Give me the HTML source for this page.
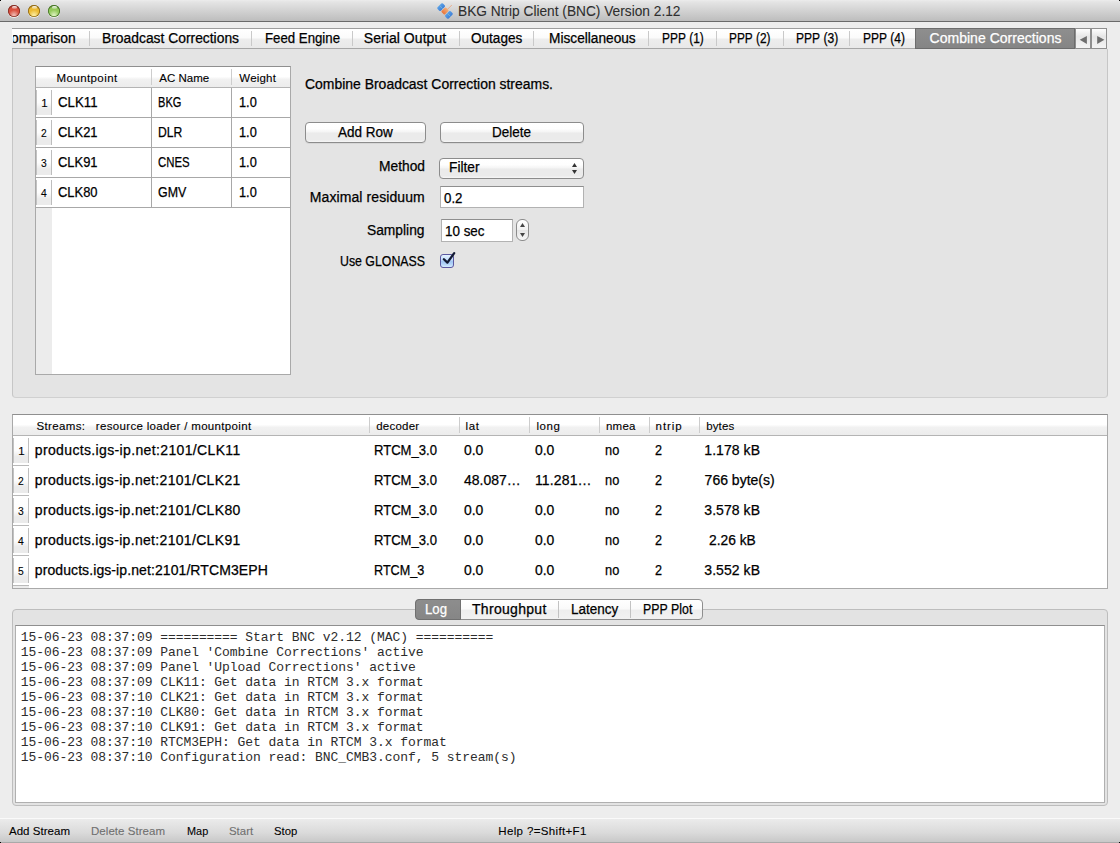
<!DOCTYPE html>
<html><head><meta charset="utf-8"><title>BNC</title>
<style>
html,body{margin:0;padding:0;}
body{width:1120px;height:843px;position:relative;overflow:hidden;background:#ededed;font-family:"Liberation Sans", sans-serif;}
body div, body svg{position:absolute;}
.t{white-space:pre;line-height:1;-webkit-text-stroke:0.25px currentColor;}
</style></head><body>
<div style="left:0px;top:0px;width:1120px;height:21px;background:linear-gradient(#ececec,#e4e4e4 10%,#bdbdbd);"></div>
<div style="left:0px;top:21px;width:1120px;height:1px;background:#6a6a6a;"></div>
<div style="left:8px;top:5px;width:12px;height:12px;border-radius:50%;background:radial-gradient(circle at 50% 85%, #f0c0b8 0%, #d9503f 45%, #d9503f 60%, #7e2a22 95%);box-shadow:inset 0 0 0 0.8px #7e2a22, 0 1px 0.5px rgba(255,255,255,0.7);"></div>
<div style="left:11.5px;top:6.2px;width:5px;height:2.6px;border-radius:50%;background:linear-gradient(rgba(255,255,255,0.95),rgba(255,255,255,0.2));"></div>
<div style="left:28px;top:5px;width:12px;height:12px;border-radius:50%;background:radial-gradient(circle at 50% 85%, #fbefa6 0%, #ecbb34 45%, #ecbb34 60%, #8a6412 95%);box-shadow:inset 0 0 0 0.8px #8a6412, 0 1px 0.5px rgba(255,255,255,0.7);"></div>
<div style="left:31.5px;top:6.2px;width:5px;height:2.6px;border-radius:50%;background:linear-gradient(rgba(255,255,255,0.95),rgba(255,255,255,0.2));"></div>
<div style="left:48px;top:5px;width:12px;height:12px;border-radius:50%;background:radial-gradient(circle at 50% 85%, #dff3c2 0%, #94ca5c 45%, #94ca5c 60%, #3f6e22 95%);box-shadow:inset 0 0 0 0.8px #3f6e22, 0 1px 0.5px rgba(255,255,255,0.7);"></div>
<div style="left:51.5px;top:6.2px;width:5px;height:2.6px;border-radius:50%;background:linear-gradient(rgba(255,255,255,0.95),rgba(255,255,255,0.2));"></div>
<svg style="left:434px;top:0px;width:22px;height:21px" viewBox="0 0 22 21">
<defs><linearGradient id="sp" x1="0" y1="0" x2="1" y2="0"><stop offset="0" stop-color="#5aa2e8"/><stop offset="1" stop-color="#3f7fd6"/></linearGradient>
<linearGradient id="bo" x1="0" y1="0" x2="0" y2="1"><stop offset="0" stop-color="#f4b07a"/><stop offset="1" stop-color="#e8743a"/></linearGradient></defs>
<g transform="rotate(45 11 11)">
<line x1="11.6" y1="8" x2="11.6" y2="2" stroke="#f0a070" stroke-width="0.9" opacity="0.8"/>
<rect x="3.1" y="7.2" width="4.8" height="7.6" rx="1.2" fill="url(#sp)"/>
<rect x="14.1" y="7.2" width="4.8" height="7.6" rx="1.2" fill="url(#sp)"/>
<line x1="3.3" y1="11" x2="7.7" y2="11" stroke="#8fc0c8" stroke-width="0.6"/>
<line x1="14.3" y1="11" x2="18.7" y2="11" stroke="#8fc0c8" stroke-width="0.6"/>
<rect x="8.6" y="7.8" width="4.8" height="6.4" rx="1" fill="url(#bo)"/>
</g>
</svg>
<div class="t" style="left:457.70px;top:4px;font-size:14px;font-family:'Liberation Sans', sans-serif;color:#2e2e2e;transform:scaleX(0.9791);transform-origin:0 0;-webkit-text-stroke:0.08px currentColor;">BKG&#160;Ntrip&#160;Client&#160;(BNC)&#160;Version&#160;2.12</div>
<div style="left:12px;top:28px;width:1095px;height:21px;background:linear-gradient(#ffffff,#fbfbfb 45%,#ededed 55%,#e9e9e9);border-top:1px solid #9d9d9d;border-bottom:1px solid #a7a7a7;box-sizing:border-box;"></div>
<div style="left:89px;top:31px;width:1px;height:15px;background:#c9c9c9;"></div>
<div style="left:251px;top:31px;width:1px;height:15px;background:#c9c9c9;"></div>
<div style="left:352px;top:31px;width:1px;height:15px;background:#c9c9c9;"></div>
<div style="left:459px;top:31px;width:1px;height:15px;background:#c9c9c9;"></div>
<div style="left:533px;top:31px;width:1px;height:15px;background:#c9c9c9;"></div>
<div style="left:648px;top:31px;width:1px;height:15px;background:#c9c9c9;"></div>
<div style="left:716px;top:31px;width:1px;height:15px;background:#c9c9c9;"></div>
<div style="left:783px;top:31px;width:1px;height:15px;background:#c9c9c9;"></div>
<div style="left:849px;top:31px;width:1px;height:15px;background:#c9c9c9;"></div>
<div style="left:13px;top:29px;width:76px;height:19px;overflow:hidden;">
<div class="t" style="left:-11.93px;top:2.00px;font-size:14px;font-family:'Liberation Sans', sans-serif;color:#000;transform:scaleX(0.9892);transform-origin:0 0;">Comparison</div>
</div>
<div class="t" style="left:101.75px;top:31px;font-size:14px;font-family:'Liberation Sans', sans-serif;color:#000;transform:scaleX(0.9892);transform-origin:0 0;">Broadcast&#160;Corrections</div>
<div class="t" style="left:264.50px;top:31px;font-size:14px;font-family:'Liberation Sans', sans-serif;color:#000;transform:scaleX(0.9449);transform-origin:0 0;">Feed&#160;Engine</div>
<div class="t" style="left:363.75px;top:31px;font-size:14px;font-family:'Liberation Sans', sans-serif;color:#000;letter-spacing:0.062px;">Serial&#160;Output</div>
<div class="t" style="left:471.25px;top:31px;font-size:14px;font-family:'Liberation Sans', sans-serif;color:#000;transform:scaleX(0.9693);transform-origin:0 0;">Outages</div>
<div class="t" style="left:548.75px;top:31px;font-size:14px;font-family:'Liberation Sans', sans-serif;color:#000;transform:scaleX(0.9775);transform-origin:0 0;">Miscellaneous</div>
<div class="t" style="left:661.75px;top:31px;font-size:14px;font-family:'Liberation Sans', sans-serif;color:#000;transform:scaleX(0.8513);transform-origin:0 0;">PPP&#160;(1)</div>
<div class="t" style="left:728.75px;top:31px;font-size:14px;font-family:'Liberation Sans', sans-serif;color:#000;transform:scaleX(0.8462);transform-origin:0 0;">PPP&#160;(2)</div>
<div class="t" style="left:795.50px;top:31px;font-size:14px;font-family:'Liberation Sans', sans-serif;color:#000;transform:scaleX(0.8615);transform-origin:0 0;">PPP&#160;(3)</div>
<div class="t" style="left:862.50px;top:31px;font-size:14px;font-family:'Liberation Sans', sans-serif;color:#000;transform:scaleX(0.8564);transform-origin:0 0;">PPP&#160;(4)</div>
<div style="left:915px;top:28px;width:160px;height:21px;background:linear-gradient(#8e8e8e,#858585);border:1px solid #6c6c6c;box-sizing:border-box;"></div>
<div class="t" style="left:929.50px;top:31px;font-size:14px;font-family:'Liberation Sans', sans-serif;color:#ffffff;letter-spacing:0.028px;">Combine&#160;Corrections</div>
<div style="left:1075px;top:28px;width:16px;height:21px;background:linear-gradient(#fdfdfd,#e6e6e6 40%,#f4f4f4);border:1px solid #8f8f8f;box-sizing:border-box;"></div>
<div style="left:1091px;top:28px;width:16px;height:21px;background:linear-gradient(#fdfdfd,#e6e6e6 40%,#f4f4f4);border:1px solid #8f8f8f;box-sizing:border-box;"></div>
<svg style="left:1075px;top:28px;width:32px;height:21px" viewBox="0 0 32 21"><polygon points="4.7,11.8 11.9,7.9 11.9,15.9" fill="#6e6e6e"/><polygon points="22.2,7.9 29.4,11.8 22.2,15.9" fill="#6e6e6e"/></svg>
<div style="left:12px;top:49px;width:1096px;height:349px;background:#e4e4e4;border:1px solid #c6c6c6;border-bottom-color:#d0d0d0;border-top:none;border-radius:0 0 4px 4px;box-sizing:border-box;"></div>
<div style="left:35px;top:66px;width:256px;height:309px;background:#fff;border:1px solid #a9a9a9;border-top-color:#8f8f8f;box-sizing:border-box;"></div>
<div style="left:36px;top:67px;width:254px;height:20px;background:linear-gradient(#ffffff,#ffffff 48%,#f1f1f1 62%,#ececec);"></div>
<div style="left:36px;top:87px;width:254px;height:1px;background:#b4b4b4;"></div>
<div style="left:151px;top:69px;width:1px;height:16px;background:#cdcdcd;"></div>
<div style="left:231px;top:69px;width:1px;height:16px;background:#cdcdcd;"></div>
<div style="left:36px;top:208px;width:16px;height:166px;background:#ececec;"></div>
<div style="left:36px;top:88px;width:16px;height:29px;background:linear-gradient(#ffffff,#fdfdfd 50%,#ebebeb 72%,#ebebeb 93%,#ffffff 93%);"></div>
<div style="left:36px;top:90px;width:1px;height:25px;background:#c2c2c2;"></div>
<div style="left:51px;top:90px;width:1px;height:25px;background:#bdbdbd;"></div>
<div style="left:36px;top:117px;width:254px;height:1px;background:#a8a8a8;"></div>
<div style="left:36px;top:118px;width:16px;height:29px;background:linear-gradient(#ffffff,#fdfdfd 50%,#ebebeb 72%,#ebebeb 93%,#ffffff 93%);"></div>
<div style="left:36px;top:120px;width:1px;height:25px;background:#c2c2c2;"></div>
<div style="left:51px;top:120px;width:1px;height:25px;background:#bdbdbd;"></div>
<div style="left:36px;top:147px;width:254px;height:1px;background:#a8a8a8;"></div>
<div style="left:36px;top:148px;width:16px;height:29px;background:linear-gradient(#ffffff,#fdfdfd 50%,#ebebeb 72%,#ebebeb 93%,#ffffff 93%);"></div>
<div style="left:36px;top:150px;width:1px;height:25px;background:#c2c2c2;"></div>
<div style="left:51px;top:150px;width:1px;height:25px;background:#bdbdbd;"></div>
<div style="left:36px;top:177px;width:254px;height:1px;background:#a8a8a8;"></div>
<div style="left:36px;top:178px;width:16px;height:29px;background:linear-gradient(#ffffff,#fdfdfd 50%,#ebebeb 72%,#ebebeb 93%,#ffffff 93%);"></div>
<div style="left:36px;top:180px;width:1px;height:25px;background:#c2c2c2;"></div>
<div style="left:51px;top:180px;width:1px;height:25px;background:#bdbdbd;"></div>
<div style="left:36px;top:207px;width:254px;height:1px;background:#a8a8a8;"></div>
<div style="left:151px;top:88px;width:1px;height:120px;background:#a8a8a8;"></div>
<div style="left:231px;top:88px;width:1px;height:120px;background:#a8a8a8;"></div>
<div class="t" style="left:56.60px;top:73px;font-size:11.5px;font-family:'Liberation Sans', sans-serif;color:#000;letter-spacing:0.403px;-webkit-text-stroke:0.1px currentColor;">Mountpoint</div>
<div class="t" style="left:159.30px;top:73px;font-size:11.5px;font-family:'Liberation Sans', sans-serif;color:#000;letter-spacing:0.021px;-webkit-text-stroke:0.1px currentColor;">AC&#160;Name</div>
<div class="t" style="left:239.30px;top:73px;font-size:11.5px;font-family:'Liberation Sans', sans-serif;color:#000;letter-spacing:0.195px;-webkit-text-stroke:0.1px currentColor;">Weight</div>
<div class="t" style="left:41.20px;top:98px;font-size:11.5px;font-family:'Liberation Sans', sans-serif;color:#000;-webkit-text-stroke:0.1px currentColor;">1</div>
<div class="t" style="left:57.50px;top:95px;font-size:14px;font-family:'Liberation Sans', sans-serif;color:#000;transform:scaleX(0.9461);transform-origin:0 0;">CLK11</div>
<div class="t" style="left:157.50px;top:95px;font-size:14px;font-family:'Liberation Sans', sans-serif;color:#000;transform:scaleX(0.7899);transform-origin:0 0;">BKG</div>
<div class="t" style="left:238.60px;top:95px;font-size:14px;font-family:'Liberation Sans', sans-serif;color:#000;transform:scaleX(0.9128);transform-origin:0 0;">1.0</div>
<div class="t" style="left:40.80px;top:128px;font-size:11.5px;font-family:'Liberation Sans', sans-serif;color:#000;transform:scaleX(0.8941);transform-origin:0 0;-webkit-text-stroke:0.1px currentColor;">2</div>
<div class="t" style="left:57.50px;top:125px;font-size:14px;font-family:'Liberation Sans', sans-serif;color:#000;transform:scaleX(0.9240);transform-origin:0 0;">CLK21</div>
<div class="t" style="left:157.50px;top:125px;font-size:14px;font-family:'Liberation Sans', sans-serif;color:#000;transform:scaleX(0.8679);transform-origin:0 0;">DLR</div>
<div class="t" style="left:238.60px;top:125px;font-size:14px;font-family:'Liberation Sans', sans-serif;color:#000;transform:scaleX(0.9128);transform-origin:0 0;">1.0</div>
<div class="t" style="left:40.80px;top:158px;font-size:11.5px;font-family:'Liberation Sans', sans-serif;color:#000;transform:scaleX(0.8941);transform-origin:0 0;-webkit-text-stroke:0.1px currentColor;">3</div>
<div class="t" style="left:57.50px;top:155px;font-size:14px;font-family:'Liberation Sans', sans-serif;color:#000;transform:scaleX(0.9240);transform-origin:0 0;">CLK91</div>
<div class="t" style="left:157.50px;top:155px;font-size:14px;font-family:'Liberation Sans', sans-serif;color:#000;transform:scaleX(0.8129);transform-origin:0 0;">CNES</div>
<div class="t" style="left:238.60px;top:155px;font-size:14px;font-family:'Liberation Sans', sans-serif;color:#000;transform:scaleX(0.9128);transform-origin:0 0;">1.0</div>
<div class="t" style="left:40.80px;top:188px;font-size:11.5px;font-family:'Liberation Sans', sans-serif;color:#000;transform:scaleX(0.8941);transform-origin:0 0;-webkit-text-stroke:0.1px currentColor;">4</div>
<div class="t" style="left:57.50px;top:185px;font-size:14px;font-family:'Liberation Sans', sans-serif;color:#000;transform:scaleX(0.9240);transform-origin:0 0;">CLK80</div>
<div class="t" style="left:157.50px;top:185px;font-size:14px;font-family:'Liberation Sans', sans-serif;color:#000;transform:scaleX(0.8847);transform-origin:0 0;">GMV</div>
<div class="t" style="left:238.60px;top:185px;font-size:14px;font-family:'Liberation Sans', sans-serif;color:#000;transform:scaleX(0.9128);transform-origin:0 0;">1.0</div>
<div class="t" style="left:305.40px;top:77px;font-size:14px;font-family:'Liberation Sans', sans-serif;color:#000;transform:scaleX(0.9960);transform-origin:0 0;">Combine&#160;Broadcast&#160;Correction&#160;streams.</div>
<div style="left:305px;top:122px;width:121px;height:21px;background:linear-gradient(#ffffff,#fefefe 30%,#f4f4f4 48%,#ebebeb 52%,#ebebeb 88%,#f6f6f6);border:1px solid #8c8c8c;border-radius:4px;box-sizing:border-box;box-shadow:0 1px 0 rgba(0,0,0,0.06);"></div>
<div class="t" style="left:338.00px;top:125px;font-size:14px;font-family:'Liberation Sans', sans-serif;color:#000;transform:scaleX(0.9649);transform-origin:0 0;">Add&#160;Row</div>
<div style="left:440px;top:122px;width:144px;height:21px;background:linear-gradient(#ffffff,#fefefe 30%,#f4f4f4 48%,#ebebeb 52%,#ebebeb 88%,#f6f6f6);border:1px solid #8c8c8c;border-radius:4px;box-sizing:border-box;box-shadow:0 1px 0 rgba(0,0,0,0.06);"></div>
<div class="t" style="left:492.30px;top:125px;font-size:14px;font-family:'Liberation Sans', sans-serif;color:#000;transform:scaleX(0.9630);transform-origin:0 0;">Delete</div>
<div class="t" style="left:378.60px;top:159px;font-size:14px;font-family:'Liberation Sans', sans-serif;color:#000;transform:scaleX(0.9840);transform-origin:0 0;">Method</div>
<div style="left:439px;top:158px;width:145px;height:21px;background:linear-gradient(#ffffff,#fefefe 30%,#f4f4f4 48%,#ebebeb 52%,#ebebeb 88%,#f6f6f6);border:1px solid #8c8c8c;border-radius:4px;box-sizing:border-box;"></div>
<div class="t" style="left:448.60px;top:160px;font-size:14px;font-family:'Liberation Sans', sans-serif;color:#000;transform:scaleX(0.9799);transform-origin:0 0;">Filter</div>
<svg style="left:570px;top:162px;width:10px;height:13px" viewBox="0 0 10 13"><polygon points="2,5 4.5,1 7,5" fill="#333"/><polygon points="2,8 7,8 4.5,12" fill="#333"/></svg>
<div class="t" style="left:309.75px;top:190px;font-size:14px;font-family:'Liberation Sans', sans-serif;color:#000;letter-spacing:0.092px;">Maximal&#160;residuum</div>
<div style="left:440px;top:186px;width:144px;height:22px;background:#fff;border:1px solid #b2b2b2;border-top-color:#8e8e8e;box-sizing:border-box;"></div>
<div class="t" style="left:443.60px;top:191px;font-size:14px;font-family:'Liberation Sans', sans-serif;color:#000;transform:scaleX(0.9487);transform-origin:0 0;">0.2</div>
<div class="t" style="left:367.25px;top:223px;font-size:14px;font-family:'Liberation Sans', sans-serif;color:#000;transform:scaleX(0.9850);transform-origin:0 0;">Sampling</div>
<div style="left:441px;top:219px;width:72px;height:23px;background:#fff;border:1px solid #b2b2b2;border-top-color:#8e8e8e;box-sizing:border-box;"></div>
<div class="t" style="left:445.20px;top:224px;font-size:14px;font-family:'Liberation Sans', sans-serif;color:#000;transform:scaleX(0.9576);transform-origin:0 0;">10&#160;sec</div>
<div style="left:516px;top:219px;width:13px;height:22px;background:linear-gradient(#ffffff,#f0f0f0 50%,#e4e4e4 50%,#f7f7f7);border:1px solid #8c8c8c;border-radius:6px;box-sizing:border-box;"></div>
<svg style="left:516px;top:219px;width:13px;height:22px" viewBox="0 0 13 22"><polygon points="4,8 6.5,4 9,8" fill="#444"/><polygon points="4,14 9,14 6.5,18" fill="#444"/></svg>
<div class="t" style="left:339.75px;top:254px;font-size:14px;font-family:'Liberation Sans', sans-serif;color:#000;transform:scaleX(0.8808);transform-origin:0 0;">Use&#160;GLONASS</div>
<div style="left:440px;top:254px;width:14px;height:14px;background:linear-gradient(#e4f2ff,#c4ddfb 40%,#a0c6f3 55%,#b8d8fa 80%,#d6ecff);border:1px solid #5a58a0;border-radius:3px;box-sizing:border-box;"></div>
<svg style="left:438px;top:249px;width:20px;height:20px" viewBox="0 0 20 20"><path d="M5.9 10.2 L9.4 13.6 L16.2 4.1" fill="none" stroke="#121a33" stroke-width="2.3" stroke-linecap="round" stroke-linejoin="round"/></svg>
<div style="left:12px;top:414px;width:1096px;height:175px;background:#fff;border:1px solid #a9a9a9;border-top-color:#8f8f8f;box-sizing:border-box;"></div>
<div style="left:13px;top:415px;width:1094px;height:20px;background:linear-gradient(#ffffff,#ffffff 48%,#f1f1f1 62%,#ececec);"></div>
<div style="left:13px;top:435px;width:1094px;height:1px;background:#b4b4b4;"></div>
<div style="left:369px;top:417px;width:1px;height:16px;background:#cdcdcd;"></div>
<div style="left:459px;top:417px;width:1px;height:16px;background:#cdcdcd;"></div>
<div style="left:529px;top:417px;width:1px;height:16px;background:#cdcdcd;"></div>
<div style="left:599px;top:417px;width:1px;height:16px;background:#cdcdcd;"></div>
<div style="left:649px;top:417px;width:1px;height:16px;background:#cdcdcd;"></div>
<div style="left:699px;top:417px;width:1px;height:16px;background:#cdcdcd;"></div>
<div class="t" style="left:36.60px;top:421px;font-size:11.5px;font-family:'Liberation Sans', sans-serif;color:#000;letter-spacing:0.329px;-webkit-text-stroke:0.1px currentColor;">Streams:&#160;&#160;&#160;resource&#160;loader&#160;/&#160;mountpoint</div>
<div class="t" style="left:376.25px;top:421px;font-size:11.5px;font-family:'Liberation Sans', sans-serif;color:#000;letter-spacing:0.229px;-webkit-text-stroke:0.1px currentColor;">decoder</div>
<div class="t" style="left:465.50px;top:421px;font-size:11.5px;font-family:'Liberation Sans', sans-serif;color:#000;letter-spacing:0.688px;-webkit-text-stroke:0.1px currentColor;">lat</div>
<div class="t" style="left:536.40px;top:421px;font-size:11.5px;font-family:'Liberation Sans', sans-serif;color:#000;letter-spacing:0.583px;-webkit-text-stroke:0.1px currentColor;">long</div>
<div class="t" style="left:606.00px;top:421px;font-size:11.5px;font-family:'Liberation Sans', sans-serif;color:#000;letter-spacing:0.208px;-webkit-text-stroke:0.1px currentColor;">nmea</div>
<div class="t" style="left:655.60px;top:421px;font-size:11.5px;font-family:'Liberation Sans', sans-serif;color:#000;letter-spacing:0.906px;-webkit-text-stroke:0.1px currentColor;">ntrip</div>
<div class="t" style="left:706.20px;top:421px;font-size:11.5px;font-family:'Liberation Sans', sans-serif;color:#000;letter-spacing:0.125px;-webkit-text-stroke:0.1px currentColor;">bytes</div>
<div style="left:13px;top:436px;width:16px;height:152px;background:#ececec;"></div>
<div style="left:13px;top:436px;width:16px;height:29px;background:linear-gradient(#ffffff,#fdfdfd 50%,#ebebeb 72%,#ebebeb 93%,#ffffff 93%);"></div>
<div style="left:13px;top:438px;width:1px;height:25px;background:#c2c2c2;"></div>
<div style="left:28px;top:438px;width:1px;height:25px;background:#bdbdbd;"></div>
<div style="left:13px;top:465px;width:16px;height:1px;background:#b9b9b9;"></div>
<div class="t" style="left:18.30px;top:446px;font-size:11.5px;font-family:'Liberation Sans', sans-serif;color:#000;-webkit-text-stroke:0.1px currentColor;">1</div>
<div class="t" style="left:34.80px;top:443px;font-size:14px;font-family:'Liberation Sans', sans-serif;color:#000;letter-spacing:0.358px;">products.igs-ip.net:2101/CLK11</div>
<div class="t" style="left:374.40px;top:443px;font-size:14px;font-family:'Liberation Sans', sans-serif;color:#000;transform:scaleX(0.9333);transform-origin:0 0;">RTCM_3.0</div>
<div class="t" style="left:464.40px;top:443px;font-size:14px;font-family:'Liberation Sans', sans-serif;color:#000;transform:scaleX(0.9949);transform-origin:0 0;">0.0</div>
<div class="t" style="left:534.50px;top:443px;font-size:14px;font-family:'Liberation Sans', sans-serif;color:#000;transform:scaleX(0.9949);transform-origin:0 0;">0.0</div>
<div class="t" style="left:605.00px;top:443px;font-size:14px;font-family:'Liberation Sans', sans-serif;color:#000;transform:scaleX(0.9152);transform-origin:0 0;">no</div>
<div class="t" style="left:654.50px;top:443px;font-size:14px;font-family:'Liberation Sans', sans-serif;color:#000;transform:scaleX(0.9032);transform-origin:0 0;">2</div>
<div class="t" style="left:704.30px;top:443px;font-size:14px;font-family:'Liberation Sans', sans-serif;color:#000;letter-spacing:0.064px;">1.178&#160;kB</div>
<div style="left:13px;top:466px;width:16px;height:29px;background:linear-gradient(#ffffff,#fdfdfd 50%,#ebebeb 72%,#ebebeb 93%,#ffffff 93%);"></div>
<div style="left:13px;top:468px;width:1px;height:25px;background:#c2c2c2;"></div>
<div style="left:28px;top:468px;width:1px;height:25px;background:#bdbdbd;"></div>
<div style="left:13px;top:495px;width:16px;height:1px;background:#b9b9b9;"></div>
<div class="t" style="left:17.90px;top:476px;font-size:11.5px;font-family:'Liberation Sans', sans-serif;color:#000;transform:scaleX(0.8941);transform-origin:0 0;-webkit-text-stroke:0.1px currentColor;">2</div>
<div class="t" style="left:34.80px;top:473px;font-size:14px;font-family:'Liberation Sans', sans-serif;color:#000;letter-spacing:0.323px;">products.igs-ip.net:2101/CLK21</div>
<div class="t" style="left:374.40px;top:473px;font-size:14px;font-family:'Liberation Sans', sans-serif;color:#000;transform:scaleX(0.9333);transform-origin:0 0;">RTCM_3.0</div>
<div class="t" style="left:464.40px;top:473px;font-size:14px;font-family:'Liberation Sans', sans-serif;color:#000;transform:scaleX(0.9969);transform-origin:0 0;">48.087…</div>
<div class="t" style="left:534.90px;top:473px;font-size:14px;font-family:'Liberation Sans', sans-serif;color:#000;letter-spacing:0.158px;">11.281…</div>
<div class="t" style="left:605.00px;top:473px;font-size:14px;font-family:'Liberation Sans', sans-serif;color:#000;transform:scaleX(0.9152);transform-origin:0 0;">no</div>
<div class="t" style="left:654.50px;top:473px;font-size:14px;font-family:'Liberation Sans', sans-serif;color:#000;transform:scaleX(0.9032);transform-origin:0 0;">2</div>
<div class="t" style="left:704.60px;top:473px;font-size:14px;font-family:'Liberation Sans', sans-serif;color:#000;">766&#160;byte(s)</div>
<div style="left:13px;top:496px;width:16px;height:29px;background:linear-gradient(#ffffff,#fdfdfd 50%,#ebebeb 72%,#ebebeb 93%,#ffffff 93%);"></div>
<div style="left:13px;top:498px;width:1px;height:25px;background:#c2c2c2;"></div>
<div style="left:28px;top:498px;width:1px;height:25px;background:#bdbdbd;"></div>
<div style="left:13px;top:525px;width:16px;height:1px;background:#b9b9b9;"></div>
<div class="t" style="left:17.90px;top:506px;font-size:11.5px;font-family:'Liberation Sans', sans-serif;color:#000;transform:scaleX(0.8941);transform-origin:0 0;-webkit-text-stroke:0.1px currentColor;">3</div>
<div class="t" style="left:34.80px;top:503px;font-size:14px;font-family:'Liberation Sans', sans-serif;color:#000;letter-spacing:0.323px;">products.igs-ip.net:2101/CLK80</div>
<div class="t" style="left:374.40px;top:503px;font-size:14px;font-family:'Liberation Sans', sans-serif;color:#000;transform:scaleX(0.9333);transform-origin:0 0;">RTCM_3.0</div>
<div class="t" style="left:464.40px;top:503px;font-size:14px;font-family:'Liberation Sans', sans-serif;color:#000;transform:scaleX(0.9949);transform-origin:0 0;">0.0</div>
<div class="t" style="left:534.50px;top:503px;font-size:14px;font-family:'Liberation Sans', sans-serif;color:#000;transform:scaleX(0.9949);transform-origin:0 0;">0.0</div>
<div class="t" style="left:605.00px;top:503px;font-size:14px;font-family:'Liberation Sans', sans-serif;color:#000;transform:scaleX(0.9152);transform-origin:0 0;">no</div>
<div class="t" style="left:654.50px;top:503px;font-size:14px;font-family:'Liberation Sans', sans-serif;color:#000;transform:scaleX(0.9032);transform-origin:0 0;">2</div>
<div class="t" style="left:704.30px;top:503px;font-size:14px;font-family:'Liberation Sans', sans-serif;color:#000;letter-spacing:0.064px;">3.578&#160;kB</div>
<div style="left:13px;top:526px;width:16px;height:29px;background:linear-gradient(#ffffff,#fdfdfd 50%,#ebebeb 72%,#ebebeb 93%,#ffffff 93%);"></div>
<div style="left:13px;top:528px;width:1px;height:25px;background:#c2c2c2;"></div>
<div style="left:28px;top:528px;width:1px;height:25px;background:#bdbdbd;"></div>
<div style="left:13px;top:555px;width:16px;height:1px;background:#b9b9b9;"></div>
<div class="t" style="left:17.90px;top:536px;font-size:11.5px;font-family:'Liberation Sans', sans-serif;color:#000;transform:scaleX(0.8941);transform-origin:0 0;-webkit-text-stroke:0.1px currentColor;">4</div>
<div class="t" style="left:34.80px;top:533px;font-size:14px;font-family:'Liberation Sans', sans-serif;color:#000;letter-spacing:0.323px;">products.igs-ip.net:2101/CLK91</div>
<div class="t" style="left:374.40px;top:533px;font-size:14px;font-family:'Liberation Sans', sans-serif;color:#000;transform:scaleX(0.9333);transform-origin:0 0;">RTCM_3.0</div>
<div class="t" style="left:464.40px;top:533px;font-size:14px;font-family:'Liberation Sans', sans-serif;color:#000;transform:scaleX(0.9949);transform-origin:0 0;">0.0</div>
<div class="t" style="left:534.50px;top:533px;font-size:14px;font-family:'Liberation Sans', sans-serif;color:#000;transform:scaleX(0.9949);transform-origin:0 0;">0.0</div>
<div class="t" style="left:605.00px;top:533px;font-size:14px;font-family:'Liberation Sans', sans-serif;color:#000;transform:scaleX(0.9152);transform-origin:0 0;">no</div>
<div class="t" style="left:654.50px;top:533px;font-size:14px;font-family:'Liberation Sans', sans-serif;color:#000;transform:scaleX(0.9032);transform-origin:0 0;">2</div>
<div class="t" style="left:708.90px;top:533px;font-size:14px;font-family:'Liberation Sans', sans-serif;color:#000;transform:scaleX(0.9853);transform-origin:0 0;">2.26&#160;kB</div>
<div style="left:13px;top:556px;width:16px;height:29px;background:linear-gradient(#ffffff,#fdfdfd 50%,#ebebeb 72%,#ebebeb 93%,#ffffff 93%);"></div>
<div style="left:13px;top:558px;width:1px;height:25px;background:#c2c2c2;"></div>
<div style="left:28px;top:558px;width:1px;height:25px;background:#bdbdbd;"></div>
<div style="left:13px;top:585px;width:16px;height:1px;background:#b9b9b9;"></div>
<div class="t" style="left:17.90px;top:566px;font-size:11.5px;font-family:'Liberation Sans', sans-serif;color:#000;transform:scaleX(0.8941);transform-origin:0 0;-webkit-text-stroke:0.1px currentColor;">5</div>
<div class="t" style="left:34.80px;top:563px;font-size:14px;font-family:'Liberation Sans', sans-serif;color:#000;letter-spacing:0.090px;">products.igs-ip.net:2101/RTCM3EPH</div>
<div class="t" style="left:374.40px;top:563px;font-size:14px;font-family:'Liberation Sans', sans-serif;color:#000;transform:scaleX(0.9022);transform-origin:0 0;">RTCM_3</div>
<div class="t" style="left:464.40px;top:563px;font-size:14px;font-family:'Liberation Sans', sans-serif;color:#000;transform:scaleX(0.9949);transform-origin:0 0;">0.0</div>
<div class="t" style="left:534.50px;top:563px;font-size:14px;font-family:'Liberation Sans', sans-serif;color:#000;transform:scaleX(0.9949);transform-origin:0 0;">0.0</div>
<div class="t" style="left:605.00px;top:563px;font-size:14px;font-family:'Liberation Sans', sans-serif;color:#000;transform:scaleX(0.9152);transform-origin:0 0;">no</div>
<div class="t" style="left:654.50px;top:563px;font-size:14px;font-family:'Liberation Sans', sans-serif;color:#000;transform:scaleX(0.9032);transform-origin:0 0;">2</div>
<div class="t" style="left:704.30px;top:563px;font-size:14px;font-family:'Liberation Sans', sans-serif;color:#000;letter-spacing:0.064px;">3.552&#160;kB</div>
<div style="left:12px;top:609px;width:1096px;height:197px;background:#e3e3e3;border:1px solid #bdbdbd;border-radius:4px;box-sizing:border-box;"></div>
<div style="left:15px;top:625px;width:1090px;height:178px;background:#fff;border:1px solid #b0b0b0;border-top-color:#8f8f8f;box-sizing:border-box;"></div>
<div style="left:415px;top:599px;width:288px;height:21px;background:linear-gradient(#ffffff,#fafafa 45%,#eeeeee 55%,#f2f2f2);border:1px solid #8e8e8e;border-radius:4px;box-sizing:border-box;"></div>
<div style="left:415px;top:599px;width:46px;height:21px;background:linear-gradient(#8d8d8d,#868686);border:1px solid #707070;border-radius:4px 0 0 4px;box-sizing:border-box;"></div>
<div style="left:558px;top:601px;width:1px;height:17px;background:#c2c2c2;"></div>
<div style="left:630px;top:601px;width:1px;height:17px;background:#c2c2c2;"></div>
<div class="t" style="left:425.00px;top:602px;font-size:14px;font-family:'Liberation Sans', sans-serif;color:#fff;transform:scaleX(0.9412);transform-origin:0 0;">Log</div>
<div class="t" style="left:472.00px;top:602px;font-size:14px;font-family:'Liberation Sans', sans-serif;color:#000;letter-spacing:0.297px;">Throughput</div>
<div class="t" style="left:571.40px;top:602px;font-size:14px;font-family:'Liberation Sans', sans-serif;color:#000;transform:scaleX(0.9633);transform-origin:0 0;">Latency</div>
<div class="t" style="left:642.90px;top:602px;font-size:14px;font-family:'Liberation Sans', sans-serif;color:#000;transform:scaleX(0.8807);transform-origin:0 0;">PPP&#160;Plot</div>
<div class="t" style="left:20.70px;top:631px;font-size:13px;font-family:'Liberation Mono', monospace;color:#2c2c2c;letter-spacing:-0.054px;-webkit-text-stroke:0;">15-06-23&#160;08:37:09&#160;==========&#160;Start&#160;BNC&#160;v2.12&#160;(MAC)&#160;==========</div>
<div class="t" style="left:20.70px;top:646px;font-size:13px;font-family:'Liberation Mono', monospace;color:#2c2c2c;letter-spacing:-0.054px;-webkit-text-stroke:0;">15-06-23&#160;08:37:09&#160;Panel&#160;'Combine&#160;Corrections'&#160;active</div>
<div class="t" style="left:20.70px;top:661px;font-size:13px;font-family:'Liberation Mono', monospace;color:#2c2c2c;letter-spacing:-0.054px;-webkit-text-stroke:0;">15-06-23&#160;08:37:09&#160;Panel&#160;'Upload&#160;Corrections'&#160;active</div>
<div class="t" style="left:20.70px;top:676px;font-size:13px;font-family:'Liberation Mono', monospace;color:#2c2c2c;letter-spacing:-0.054px;-webkit-text-stroke:0;">15-06-23&#160;08:37:09&#160;CLK11:&#160;Get&#160;data&#160;in&#160;RTCM&#160;3.x&#160;format</div>
<div class="t" style="left:20.70px;top:691px;font-size:13px;font-family:'Liberation Mono', monospace;color:#2c2c2c;letter-spacing:-0.054px;-webkit-text-stroke:0;">15-06-23&#160;08:37:10&#160;CLK21:&#160;Get&#160;data&#160;in&#160;RTCM&#160;3.x&#160;format</div>
<div class="t" style="left:20.70px;top:706px;font-size:13px;font-family:'Liberation Mono', monospace;color:#2c2c2c;letter-spacing:-0.054px;-webkit-text-stroke:0;">15-06-23&#160;08:37:10&#160;CLK80:&#160;Get&#160;data&#160;in&#160;RTCM&#160;3.x&#160;format</div>
<div class="t" style="left:20.70px;top:721px;font-size:13px;font-family:'Liberation Mono', monospace;color:#2c2c2c;letter-spacing:-0.054px;-webkit-text-stroke:0;">15-06-23&#160;08:37:10&#160;CLK91:&#160;Get&#160;data&#160;in&#160;RTCM&#160;3.x&#160;format</div>
<div class="t" style="left:20.70px;top:736px;font-size:13px;font-family:'Liberation Mono', monospace;color:#2c2c2c;letter-spacing:-0.054px;-webkit-text-stroke:0;">15-06-23&#160;08:37:10&#160;RTCM3EPH:&#160;Get&#160;data&#160;in&#160;RTCM&#160;3.x&#160;format</div>
<div class="t" style="left:20.70px;top:751px;font-size:13px;font-family:'Liberation Mono', monospace;color:#2c2c2c;letter-spacing:-0.054px;-webkit-text-stroke:0;">15-06-23&#160;08:37:10&#160;Configuration&#160;read:&#160;BNC_CMB3.conf,&#160;5&#160;stream(s)</div>
<div style="left:0px;top:818px;width:1120px;height:1px;background:#fafafa;"></div>
<div style="left:0px;top:819px;width:1120px;height:23px;background:linear-gradient(#ebebeb,#dadada 60%,#c8c8c8);"></div>
<div style="left:0px;top:842px;width:1120px;height:1px;background:#a9a9a9;"></div>
<div style="left:0px;top:0px;width:1px;height:1px;background:#000;"></div>
<div style="left:1119px;top:0px;width:1px;height:1px;background:#000;"></div>
<div style="left:0px;top:842px;width:1px;height:1px;background:#000;"></div>
<div style="left:1119px;top:842px;width:1px;height:1px;background:#000;"></div>
<div class="t" style="left:9.00px;top:826px;font-size:11.5px;font-family:'Liberation Sans', sans-serif;color:#000;letter-spacing:0.028px;-webkit-text-stroke:0.1px currentColor;">Add&#160;Stream</div>
<div class="t" style="left:91.00px;top:826px;font-size:11.5px;font-family:'Liberation Sans', sans-serif;color:#707070;letter-spacing:0.042px;-webkit-text-stroke:0.1px currentColor;">Delete&#160;Stream</div>
<div class="t" style="left:186.90px;top:826px;font-size:11.5px;font-family:'Liberation Sans', sans-serif;color:#000;transform:scaleX(0.9475);transform-origin:0 0;-webkit-text-stroke:0.1px currentColor;">Map</div>
<div class="t" style="left:229.00px;top:826px;font-size:11.5px;font-family:'Liberation Sans', sans-serif;color:#707070;transform:scaleX(0.9938);transform-origin:0 0;-webkit-text-stroke:0.1px currentColor;">Start</div>
<div class="t" style="left:274.00px;top:826px;font-size:11.5px;font-family:'Liberation Sans', sans-serif;color:#000;transform:scaleX(0.9841);transform-origin:0 0;-webkit-text-stroke:0.1px currentColor;">Stop</div>
<div class="t" style="left:498.30px;top:826px;font-size:11.5px;font-family:'Liberation Sans', sans-serif;color:#000;letter-spacing:0.355px;-webkit-text-stroke:0.1px currentColor;">Help&#160;?=Shift+F1</div>
</body></html>
